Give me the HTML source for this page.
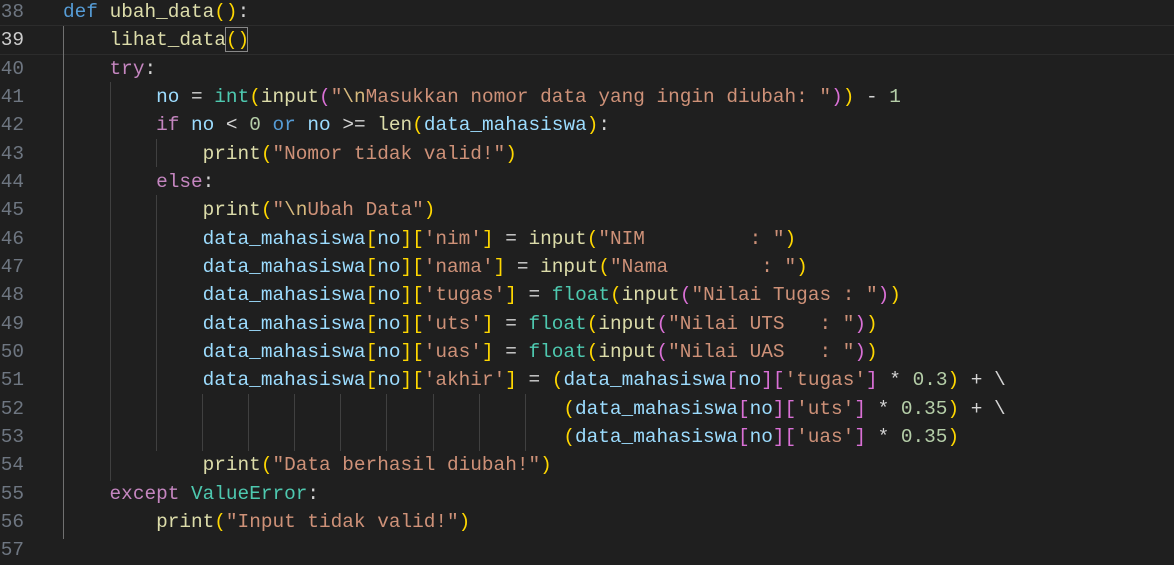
<!DOCTYPE html>
<html><head><meta charset="utf-8"><style>
body{margin:0;width:1174px;height:559px;background:#1f1f1f;overflow:hidden;position:relative;font-family:"Liberation Mono",monospace;font-size:19.4px;}
.ln{position:absolute;left:0;width:24px;text-align:right;color:#6e7681;height:28.33px;line-height:28.33px;}
.l{position:absolute;left:63px;white-space:pre;height:28.33px;line-height:28.33px;color:#d4d4d4;}
.g{position:absolute;width:1px;background:#404040;}
.k{color:#569cd6}.c{color:#c586c0}.f{color:#dcdcaa}.t{color:#4ec9b0}.s{color:#ce9178}.v{color:#9cdcfe}.n{color:#b5cea8}.e{color:#d7ba7d}
.y{color:#ffd700}.p{color:#da70d6}
</style></head><body>
<div style="position:absolute;left:0;right:0;top:25px;height:28px;border-top:1px solid #2c2c2c;border-bottom:1px solid #2c2c2c"></div>
<div class="g" style="left:63px;top:26px;height:513px;background:#707070"></div>
<div class="g" style="left:110px;top:82px;height:399px"></div>
<div class="g" style="left:156px;top:139px;height:28px"></div>
<div class="g" style="left:156px;top:195px;height:256px"></div>
<div class="g" style="left:202px;top:394px;height:57px"></div>
<div class="g" style="left:248px;top:394px;height:57px"></div>
<div class="g" style="left:294px;top:394px;height:57px"></div>
<div class="g" style="left:340px;top:394px;height:57px"></div>
<div class="g" style="left:386px;top:394px;height:57px"></div>
<div class="g" style="left:433px;top:394px;height:57px"></div>
<div class="g" style="left:479px;top:394px;height:57px"></div>
<div class="g" style="left:525px;top:394px;height:57px"></div>
<div style="position:absolute;left:225px;top:27px;width:23px;height:25px;border:1px solid #888;box-sizing:border-box"></div>
<div class="ln" style="top:-2px">38</div>
<div class="ln" style="top:26.33px;color:#cccccc">39</div>
<div class="ln" style="top:54.66px">40</div>
<div class="ln" style="top:83px">41</div>
<div class="ln" style="top:111.3px">42</div>
<div class="ln" style="top:139.6px">43</div>
<div class="ln" style="top:168px">44</div>
<div class="ln" style="top:196.3px">45</div>
<div class="ln" style="top:224.6px">46</div>
<div class="ln" style="top:253px">47</div>
<div class="ln" style="top:281.3px">48</div>
<div class="ln" style="top:309.6px">49</div>
<div class="ln" style="top:338px">50</div>
<div class="ln" style="top:366.3px">51</div>
<div class="ln" style="top:394.6px">52</div>
<div class="ln" style="top:423px">53</div>
<div class="ln" style="top:451.3px">54</div>
<div class="ln" style="top:479.6px">55</div>
<div class="ln" style="top:508px">56</div>
<div class="ln" style="top:536.3px">57</div>
<div class="l" style="top:-2px"><span class="k">def</span> <span class="f">ubah_data</span><span class="y">()</span>:</div>
<div class="l" style="top:26.33px">    <span class="f">lihat_data</span><span class="y">()</span></div>
<div class="l" style="top:54.66px">    <span class="c">try</span>:</div>
<div class="l" style="top:83px">        <span class="v">no</span> = <span class="t">int</span><span class="y">(</span><span class="f">input</span><span class="p">(</span><span class="s">"</span><span class="e">\n</span><span class="s">Masukkan nomor data yang ingin diubah: "</span><span class="p">)</span><span class="y">)</span> - <span class="n">1</span></div>
<div class="l" style="top:111.3px">        <span class="c">if</span> <span class="v">no</span> &lt; <span class="n">0</span> <span class="k">or</span> <span class="v">no</span> &gt;= <span class="f">len</span><span class="y">(</span><span class="v">data_mahasiswa</span><span class="y">)</span>:</div>
<div class="l" style="top:139.6px">            <span class="f">print</span><span class="y">(</span><span class="s">"Nomor tidak valid!"</span><span class="y">)</span></div>
<div class="l" style="top:168px">        <span class="c">else</span>:</div>
<div class="l" style="top:196.3px">            <span class="f">print</span><span class="y">(</span><span class="s">"</span><span class="e">\n</span><span class="s">Ubah Data"</span><span class="y">)</span></div>
<div class="l" style="top:224.6px">            <span class="v">data_mahasiswa</span><span class="y">[</span><span class="v">no</span><span class="y">][</span><span class="s">'nim'</span><span class="y">]</span> = <span class="f">input</span><span class="y">(</span><span class="s">"NIM         : "</span><span class="y">)</span></div>
<div class="l" style="top:253px">            <span class="v">data_mahasiswa</span><span class="y">[</span><span class="v">no</span><span class="y">][</span><span class="s">'nama'</span><span class="y">]</span> = <span class="f">input</span><span class="y">(</span><span class="s">"Nama        : "</span><span class="y">)</span></div>
<div class="l" style="top:281.3px">            <span class="v">data_mahasiswa</span><span class="y">[</span><span class="v">no</span><span class="y">][</span><span class="s">'tugas'</span><span class="y">]</span> = <span class="t">float</span><span class="y">(</span><span class="f">input</span><span class="p">(</span><span class="s">"Nilai Tugas : "</span><span class="p">)</span><span class="y">)</span></div>
<div class="l" style="top:309.6px">            <span class="v">data_mahasiswa</span><span class="y">[</span><span class="v">no</span><span class="y">][</span><span class="s">'uts'</span><span class="y">]</span> = <span class="t">float</span><span class="y">(</span><span class="f">input</span><span class="p">(</span><span class="s">"Nilai UTS   : "</span><span class="p">)</span><span class="y">)</span></div>
<div class="l" style="top:338px">            <span class="v">data_mahasiswa</span><span class="y">[</span><span class="v">no</span><span class="y">][</span><span class="s">'uas'</span><span class="y">]</span> = <span class="t">float</span><span class="y">(</span><span class="f">input</span><span class="p">(</span><span class="s">"Nilai UAS   : "</span><span class="p">)</span><span class="y">)</span></div>
<div class="l" style="top:366.3px">            <span class="v">data_mahasiswa</span><span class="y">[</span><span class="v">no</span><span class="y">][</span><span class="s">'akhir'</span><span class="y">]</span> = <span class="y">(</span><span class="v">data_mahasiswa</span><span class="p">[</span><span class="v">no</span><span class="p">][</span><span class="s">'tugas'</span><span class="p">]</span> * <span class="n">0.3</span><span class="y">)</span> + \</div>
<div class="l" style="top:394.6px">                                           <span class="y">(</span><span class="v">data_mahasiswa</span><span class="p">[</span><span class="v">no</span><span class="p">][</span><span class="s">'uts'</span><span class="p">]</span> * <span class="n">0.35</span><span class="y">)</span> + \</div>
<div class="l" style="top:423px">                                           <span class="y">(</span><span class="v">data_mahasiswa</span><span class="p">[</span><span class="v">no</span><span class="p">][</span><span class="s">'uas'</span><span class="p">]</span> * <span class="n">0.35</span><span class="y">)</span></div>
<div class="l" style="top:451.3px">            <span class="f">print</span><span class="y">(</span><span class="s">"Data berhasil diubah!"</span><span class="y">)</span></div>
<div class="l" style="top:479.6px">    <span class="c">except</span> <span class="t">ValueError</span>:</div>
<div class="l" style="top:508px">        <span class="f">print</span><span class="y">(</span><span class="s">"Input tidak valid!"</span><span class="y">)</span></div>
</body></html>
